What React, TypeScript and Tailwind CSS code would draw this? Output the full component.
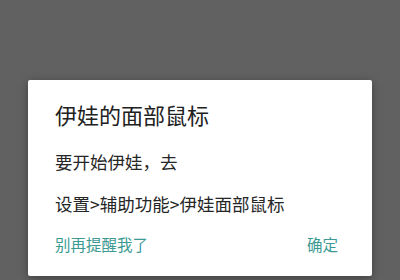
import React from "react";

export default function App() {
  return (
    <div
      className="w-[400px] h-[280px] bg-[#616161] overflow-hidden pt-[80px] pl-[28px]"
      style={{ fontFamily: '"Noto Sans CJK SC", "Noto Sans", sans-serif' }}
    >
      <div className="w-[344px] h-[196px] bg-white rounded-[2px] shadow-[0_2px_8px_rgba(0,0,0,0.35)] pl-[27px] pr-[34px] pt-[23px]">
        <div className="text-[22px] leading-[22px] text-[#212121]">伊娃的面部鼠标</div>
        <div className="mt-[28px] text-[17.5px] leading-[18px] text-[#262626]">要开始伊娃，去</div>
        <div className="mt-[24px] text-[17.5px] leading-[18px] text-[#262626]">设置&gt;辅助功能&gt;伊娃面部鼠标</div>
        <div className="mt-[23px] flex justify-between text-[15.5px] leading-[16px] text-[#3c9a93]">
          <span>别再提醒我了</span>
          <span>确定</span>
        </div>
      </div>
    </div>
  );
}
